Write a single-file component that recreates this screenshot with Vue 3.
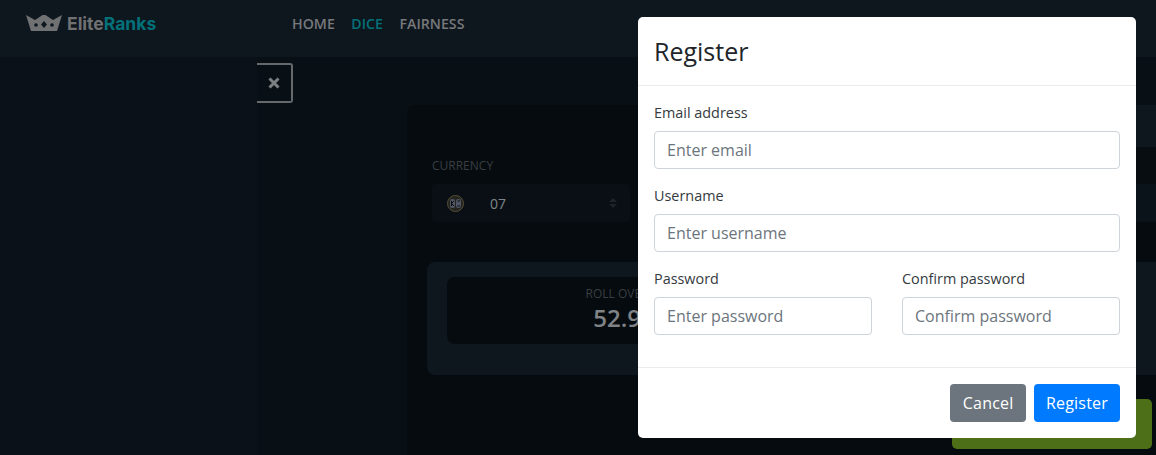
<template>
  <div class="page">
    <header class="topbar">
      <div class="logo">
        <svg class="crown" width="36" height="16" viewBox="0 0 36 16">
          <path fill="#6f7173" d="M0 0 L9 5 L18 -1 L27 5 L36 0 L31 16 L5 16 Z" />
          <circle cx="10" cy="10" r="1.800" fill="#0e161e" />
          <circle cx="26" cy="10" r="1.800" fill="#0e161e" />
          <path fill="#0e161e" d="M18 6 L21 9.500 L18 13 L15 9.500 Z" />
        </svg>
        <span class="logo-text">Elite<em>Ranks</em></span>
      </div>
      <nav class="nav">
        <a v-for="link in links" :key="link" :class="{ active: link === 'DICE' }">{{ link }}</a>
      </nav>
    </header>

    <div class="body">
      <aside class="sidebar"></aside>
      <div class="close-tab">
        <svg width="12" height="12" viewBox="0 0 12 12">
          <path d="M1.500 1.500 L10.500 10.500 M10.500 1.500 L1.500 10.500" stroke="#7d8184" stroke-width="3" />
        </svg>
      </div>
      <main class="content">
        <div class="game">
          <div class="game-top">
            <div class="field">
              <label>CURRENCY</label>
              <div class="select">
                <svg class="coin" width="17" height="17" viewBox="0 0 17 17">
                  <circle cx="8.500" cy="8.500" r="8" fill="#24241f" stroke="#575038" stroke-width="1" />
                  <rect x="3" y="4" width="5" height="9" rx="2" fill="#4f5564" />
                  <rect x="9" y="4" width="5" height="9" rx="2" fill="#4f5564" />
                  <path d="M4.500 6v5M7 6l-2.500 2.500 2.500 2.500M10.500 6h2.500M10.500 11h2.500" stroke="#0c0c0c" stroke-width="1" fill="none" />
                </svg>
                <span class="select-value">07</span>
                <svg class="updown" width="8" height="10" viewBox="0 0 8 10">
                  <path d="M4 0 L8 4 L0 4 Z M4 10 L0 6 L8 6 Z" fill="#1e2327" />
                </svg>
              </div>
            </div>
            <div class="side-col">
              <div class="side-tab"></div>
              <div class="side-gap"></div>
              <div class="side-input"></div>
            </div>
          </div>
          <section class="roll-panel">
            <div class="roll-box">
              <span class="roll-label">ROLL OVER</span>
              <span class="roll-value">52.98</span>
            </div>
          </section>
          <button class="bet-btn"></button>
        </div>
      </main>
    </div>

    <div class="modal">
      <div class="modal-header">
        <h5>Register</h5>
      </div>
      <form class="modal-body" @submit.prevent>
        <div class="form-group">
          <label>Email address</label>
          <input type="email" placeholder="Enter email" />
        </div>
        <div class="form-group">
          <label>Username</label>
          <input type="text" placeholder="Enter username" />
        </div>
        <div class="form-row">
          <div class="form-group">
            <label>Password</label>
            <input type="password" placeholder="Enter password" />
          </div>
          <div class="form-group">
            <label>Confirm password</label>
            <input type="password" placeholder="Confirm password" />
          </div>
        </div>
      </form>
      <div class="modal-footer">
        <button class="btn cancel">Cancel</button>
        <button class="btn primary">Register</button>
      </div>
    </div>
  </div>
</template>

<script setup>
const links = ["HOME", "DICE", "FAIRNESS"];
</script>

<style>
html,
body {
  margin: 0;
  background: #0a1118;
  overflow: hidden;
}
</style>

<style scoped>
.page {
  position: relative;
  width: 1156px;
  height: 455px;
  overflow: hidden;
  background: #0a1118;
  font-family: "Open Sans", sans-serif;
}

.topbar {
  height: 57px;
  background: #0e161e;
  display: flex;
  align-items: center;
  padding-bottom: 11px;
  box-sizing: border-box;
}

.logo {
  display: flex;
  align-items: center;
  gap: 5px;
  width: 292px;
  padding-left: 26px;
  box-sizing: border-box;
}

.logo-text {
  font-family: Inter, sans-serif;
  font-weight: 700;
  font-size: 17.5px;
  color: #6f7173;
}

.logo-text em {
  font-style: normal;
  color: #03717a;
}

.nav {
  display: flex;
  gap: 16.5px;
}

.nav a {
  font-size: 14.2px;
  font-weight: 600;
  color: #77797b;
}

.nav a.active {
  color: #03717a;
}

.body {
  position: relative;
  display: flex;
  height: 398px;
}

.sidebar {
  flex: none;
  width: 257px;
  background: #0a1118;
}

.close-tab {
  position: absolute;
  left: 257px;
  top: 6px;
  width: 36px;
  height: 40px;
  box-sizing: border-box;
  border: 2px solid #65696c;
  border-left: none;
  border-radius: 0 3px 3px 0;
  display: flex;
  align-items: center;
  justify-content: center;
}

.content {
  flex: 1;
  min-width: 0;
  background: #081016;
  padding: 48px 0 0 150px;
  overflow: hidden;
}

.game {
  height: 350px;
  background: #060b0f;
  border-top-left-radius: 8px;
  display: flex;
  flex-direction: column;
}

.game-top {
  height: 157px;
  flex: none;
  display: flex;
  justify-content: space-between;
}

.field {
  padding: 53px 0 0 25px;
}

.field label {
  display: block;
  font-size: 12px;
  line-height: 16px;
  color: #3a3e41;
  margin-bottom: 10px;
}

.select {
  width: 198px;
  height: 38px;
  background: #090f14;
  border-radius: 4px;
  display: flex;
  align-items: center;
  padding: 0 13px 0 15px;
  box-sizing: border-box;
}

.select-value {
  flex: 1;
  margin-left: 26px;
  font-size: 14px;
  color: #80878c;
}

.side-col {
  width: 260px;
  display: flex;
  flex-direction: column;
}

.side-tab {
  height: 42px;
  background: #0e161e;
}

.side-gap {
  height: 37px;
  background: #080d12;
}

.side-input {
  height: 38px;
  background: #0a131a;
}

.roll-panel {
  flex: none;
  margin-left: 20px;
  height: 113px;
  background: #0e161e;
  border-radius: 8px 0 0 8px;
  padding: 15px 20px;
  box-sizing: border-box;
}

.roll-box {
  width: 354px;
  height: 67px;
  background: #060b0f;
  border-radius: 8px;
  display: flex;
  flex-direction: column;
  align-items: center;
}

.roll-label {
  font-size: 12px;
  line-height: 16px;
  color: #3a3e41;
  margin: 9px 14px 0 0;
}

.roll-value {
  font-size: 24px;
  font-weight: 600;
  line-height: 32px;
  color: #808386;
}

.bet-btn {
  flex: none;
  align-self: flex-end;
  margin: 24px 4px 0 0;
  width: 200px;
  height: 50px;
  border: none;
  border-radius: 5px;
  background: #4d6f17;
}

.modal {
  position: absolute;
  left: 638px;
  top: 17px;
  width: 498px;
  height: 421px;
  background: #fff;
  border-radius: 5px;
  display: flex;
  flex-direction: column;
  color: #212529;
}

.modal-header {
  height: 69px;
  box-sizing: border-box;
  border-bottom: 1px solid #e9ecef;
  display: flex;
  align-items: center;
  padding: 0 16px;
}

.modal-header h5 {
  margin: 0;
  font-size: 25px;
  font-weight: 500;
}

.modal-body {
  flex: 1;
  padding: 16px;
}

.form-group {
  margin-bottom: 16px;
  flex: 1;
}

.form-group label {
  display: block;
  font-size: 14.4px;
  line-height: 21px;
  margin-bottom: 8px;
  color: #343a40;
}

.form-group input {
  display: block;
  width: 100%;
  height: 38px;
  box-sizing: border-box;
  border: 1px solid #ced4da;
  border-radius: 4px;
  padding: 6px 12px;
  font: 400 16px "Open Sans", sans-serif;
}

.form-group input::placeholder {
  color: #6c757d;
}

.form-row {
  display: flex;
  gap: 30px;
}

.modal-footer {
  height: 71px;
  box-sizing: border-box;
  border-top: 1px solid #e9ecef;
  display: flex;
  justify-content: flex-end;
  align-items: center;
  gap: 8px;
  padding: 0 16px;
}

.btn {
  height: 38px;
  padding: 0 12px;
  border: none;
  border-radius: 4px;
  font: 400 16px "Open Sans", sans-serif;
  letter-spacing: 0.2px;
  color: #fff;
}

.cancel {
  background: #6c757d;
  padding: 0 12.5px;
}

.primary {
  background: #007bff;
}
</style>
